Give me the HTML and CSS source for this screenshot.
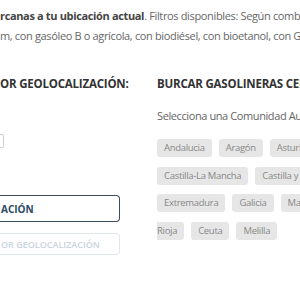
FILE: index.html
```html
<!DOCTYPE html>
<html lang="es">
<head>
  <meta charset="UTF-8">
  <title>Gasolineras</title>
  <meta name="viewport" content="width=device-width, initial-scale=1">
  <link rel="stylesheet" href="styles.css">
</head>
<body>
  <div class="intro">
    <p><strong>rcanas a tu ubicación actual</strong>. Filtros disponibles: Según combustible</p>
    <p>m, con gasóleo B o agrícola, con biodiésel, con bioetanol, con GLP</p>
  </div>

  <div class="cols">
    <section class="geo">
      <h2>OR GEOLOCALIZACIÓN:</h2>
      <div class="field"><span class="box"></span></div>
      <button class="btn main">ACIÓN</button>
      <button class="btn off">OR GEOLOCALIZACIÓN</button>
    </section>

    <section class="region">
      <h2>BURCAR GASOLINERAS CERCANAS</h2>
      <p class="hint">Selecciona una Comunidad Autónoma</p>
      <div class="chips">
        <div class="row">
          <span class="chip">Andalucia</span>
          <span class="chip">Aragón</span>
          <span class="chip">Asturias</span>
          <span class="chip">Baleares</span>
        </div>
        <div class="row">
          <span class="chip">Castilla-La Mancha</span>
          <span class="chip">Castilla y León</span>
        </div>
        <div class="row">
          <span class="chip">Extremadura</span>
          <span class="chip">Galicia</span>
          <span class="chip">Madrid</span>
        </div>
        <div class="row">
          <span class="chip cont">Rioja</span>
          <span class="chip">Ceuta</span>
          <span class="chip">Melilla</span>
        </div>
      </div>
    </section>
  </div>
</body>
</html>
```

FILE: styles.css
```css
body {
  margin: 0;
  font-family: 'Open Sans', sans-serif;
  background: #fff;
  color: #666;
  overflow: hidden;
}

.intro {
  padding-top: 6px;
}

.intro p {
  margin: 0;
  font-size: 11px;
  letter-spacing: -0.35px;
  line-height: 20px;
  white-space: nowrap;
}

.intro strong {
  color: #444;
}

.cols {
  display: flex;
  gap: 30px;
  margin-top: 29px;
}

h2 {
  margin: 0;
  font-size: 11.5px;
  letter-spacing: -0.2px;
  line-height: 18px;
  color: #333;
  white-space: nowrap;
}

/* columna izquierda */
.geo {
  width: 127px;
  flex-shrink: 0;
}

.field {
  margin-top: 41px;
  height: 14px;
}

.box {
  display: block;
  width: 3px;
  height: 12px;
  border: 1px solid #ccc;
  border-left: 0;
  border-radius: 0 2px 2px 0;
}

.btn {
  display: block;
  width: 120px;
  height: 27px;
  margin-top: 47px;
  padding: 0 0 0 1px;
  text-align: left;
  font-family: 'Open Sans', sans-serif;
  font-size: 9px;
  font-weight: bold;
  background: #fff;
  border-radius: 0 4px 4px 0;
}

.btn.main {
  font-size: 10px;
  color: #2b4a66;
  border: 1.5px solid #3b4c5e;
  border-left: 0;
}

.btn.off {
  margin-top: 11px;
  height: 22px;
  color: #c9d4de;
  border: 1px solid #e0e6ec;
  border-left: 0;
  font-weight: 600;
}

/* columna derecha */
.region {
  white-space: nowrap;
}

.hint {
  margin: 15px 0 0;
  font-size: 11px;
  letter-spacing: -0.4px;
  color: #666;
}

.chips {
  margin-top: 16px;
}

.row {
  display: flex;
  gap: 7px;
  margin-bottom: 9.5px;
}

.chip {
  flex-shrink: 0;
  background: #e6e6e6;
  color: #888;
  font-size: 9.5px;
  letter-spacing: -0.3px;
  line-height: 18px;
  padding: 0 7px;
  border-radius: 3px;
}

.chip.cont {
  padding-left: 0;
  border-radius: 0 3px 3px 0;
}
```
